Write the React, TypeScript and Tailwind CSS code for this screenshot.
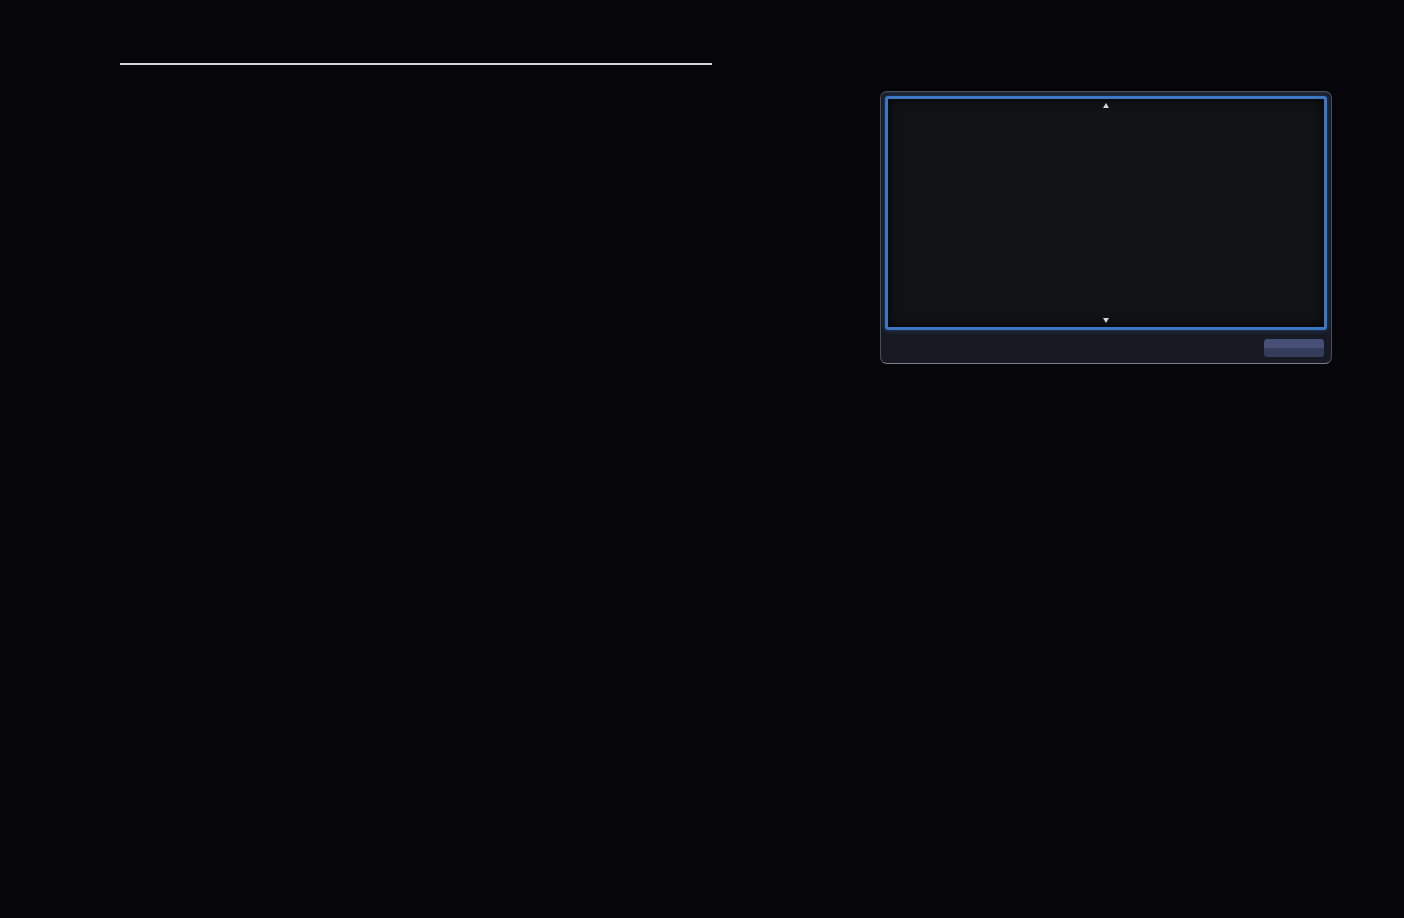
import React from "react";

export default function App() {
  return (
    <div className="w-[1404px] h-[918px] bg-[#05050a] relative overflow-hidden" style={{ fontFamily: "'Liberation Sans', sans-serif" }}>
      <div className="flex">
        <div className="pl-[120px] pt-[63px]">
          <div className="w-[592px] h-[2px] bg-[#d6d6d8]" />
        </div>
        <div className="ml-[168px] mt-[91px]">
          <div className="w-[452px] h-[273px] rounded-[7px] border border-[#4a4e5a] border-b-[#7c7f88] bg-[#171a22] flex flex-col p-[4px] shadow-[inset_0_1px_0_rgba(255,255,255,0.08)]">
            <div className="h-[234px] rounded-[3px] border-[3px] border-[#3b78c4] bg-[#111214] flex flex-col items-center justify-between py-[4px] shadow-[inset_0_0_10px_rgba(0,0,0,0.9),0_0_5px_rgba(70,130,220,0.4)]">
              <svg width="6" height="5" viewBox="0 0 6 5"><path d="M3 0 L6 5 L0 5 Z" fill="#d0d4dc" /></svg>
              <svg width="6" height="5" viewBox="0 0 6 5"><path d="M0 0 L6 0 L3 5 Z" fill="#d0d4dc" /></svg>
            </div>
            <div className="flex-1 flex items-end justify-end pr-[3px] pb-[2px]">
              <div className="w-[60px] h-[18px] rounded-[4px] bg-[#3a4263] flex flex-col overflow-hidden">
                <div className="h-[9px] bg-[#465077]" />
                <div className="flex-1 bg-[#363d5c]" />
              </div>
            </div>
          </div>
        </div>
      </div>
    </div>
  );
}
